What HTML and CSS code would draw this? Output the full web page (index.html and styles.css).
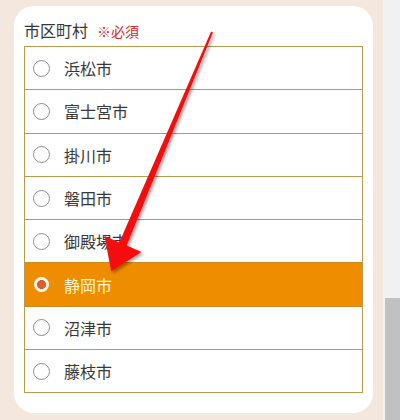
FILE: index.html
```html
<!DOCTYPE html>
<html lang="ja">
<head>
<meta charset="utf-8">
<title>市区町村</title>
<link rel="stylesheet" href="styles.css">
</head>
<body>
<div class="screen">
  <div class="page">
    <div class="card">
      <div class="label">市区町村<span class="req">※必須</span></div>
      <ul class="list">
        <li class="row"><span class="radio"></span><span class="name">浜松市</span></li>
        <li class="row"><span class="radio"></span><span class="name">富士宮市</span></li>
        <li class="row"><span class="radio"></span><span class="name">掛川市</span></li>
        <li class="row"><span class="radio"></span><span class="name">磐田市</span></li>
        <li class="row"><span class="radio"></span><span class="name">御殿場市</span></li>
        <li class="row selected"><span class="radio"></span><span class="name">静岡市</span></li>
        <li class="row"><span class="radio"></span><span class="name">沼津市</span></li>
        <li class="row"><span class="radio"></span><span class="name">藤枝市</span></li>
      </ul>
    </div>
  </div>
  <div class="scrollbar"><div class="thumb"></div></div>
  <svg class="arrow" width="400" height="420" viewBox="0 0 400 420">
    <defs>
      <filter id="sh" x="-20%" y="-20%" width="140%" height="140%">
        <feDropShadow dx="2" dy="2" stdDeviation="1.6" flood-color="#000" flood-opacity="0.35"/>
      </filter>
    </defs>
    <polygon filter="url(#sh)" fill="#f50d0d" points="212.9,32.4 126.7,245.6 141.4,251.9 111.2,271.6 104.6,236.1 119.3,242.4 211.1,31.6"/>
  </svg>
</div>
</body>
</html>
```
FILE: styles.css
```css
* { box-sizing: border-box; }
html, body { margin: 0; padding: 0; }
body {
  width: 400px;
  height: 420px;
  overflow: hidden;
  font-family: "Noto Sans CJK JP", "Noto Sans", sans-serif;
  color: #383838;
}
.screen {
  position: relative;
  display: flex;
  width: 400px;
  height: 420px;
}
.page {
  width: 383px;
  height: 420px;
  background: #f3e7de;
  padding: 6px 10px 0 14px;
}
.card {
  width: 359px;
  height: 407px;
  background: #fff;
  border-radius: 20px;
  padding: 14px 10px 0 10px;
}
.label {
  font-size: 16px;
  line-height: 20px;
  height: 20px;
  margin-left: 0;
  margin-bottom: 6px;
  white-space: nowrap;
}
.req {
  color: #d2262b;
  font-size: 14px;
  margin-left: 9px;
}
.list {
  list-style: none;
  margin: 0;
  padding: 0;
  border: 1px solid #b99a4e;
}
.row {
  display: flex;
  align-items: center;
  height: 43.3px;
  padding-left: 8px;
  border-top: 1px solid #b99a4e;
  font-size: 16px;
}
.row:first-child {
  height: 42.3px;
  border-top: none;
}
.radio {
  width: 17px;
  height: 17px;
  border: 1px solid #8c8c8c;
  border-radius: 50%;
  background: #fff;
  flex: none;
  margin-right: 14px;
}
.name {
  line-height: 20px;
  white-space: nowrap;
}
.row.selected {
  background: #ef8d00;
  color: #fff4cc;
  border-top-color: #c98a1e;
}
.row.selected .radio {
  width: 15px;
  height: 15px;
  margin-left: 1px;
  margin-right: 15px;
  border: none;
  background: radial-gradient(circle, #e15d27 0 4.2px, #fffaf2 4.8px);
}
.row.selected + .row {
  border-top-color: #c98a1e;
}
.scrollbar {
  width: 17px;
  height: 420px;
  background: #f1f1f1;
  padding-top: 298px;
  padding-left: 2px;
}
.thumb {
  height: 122px;
  background: #c1c1c1;
}
.arrow {
  position: absolute;
  left: 0;
  top: 0;
  pointer-events: none;
}
```
